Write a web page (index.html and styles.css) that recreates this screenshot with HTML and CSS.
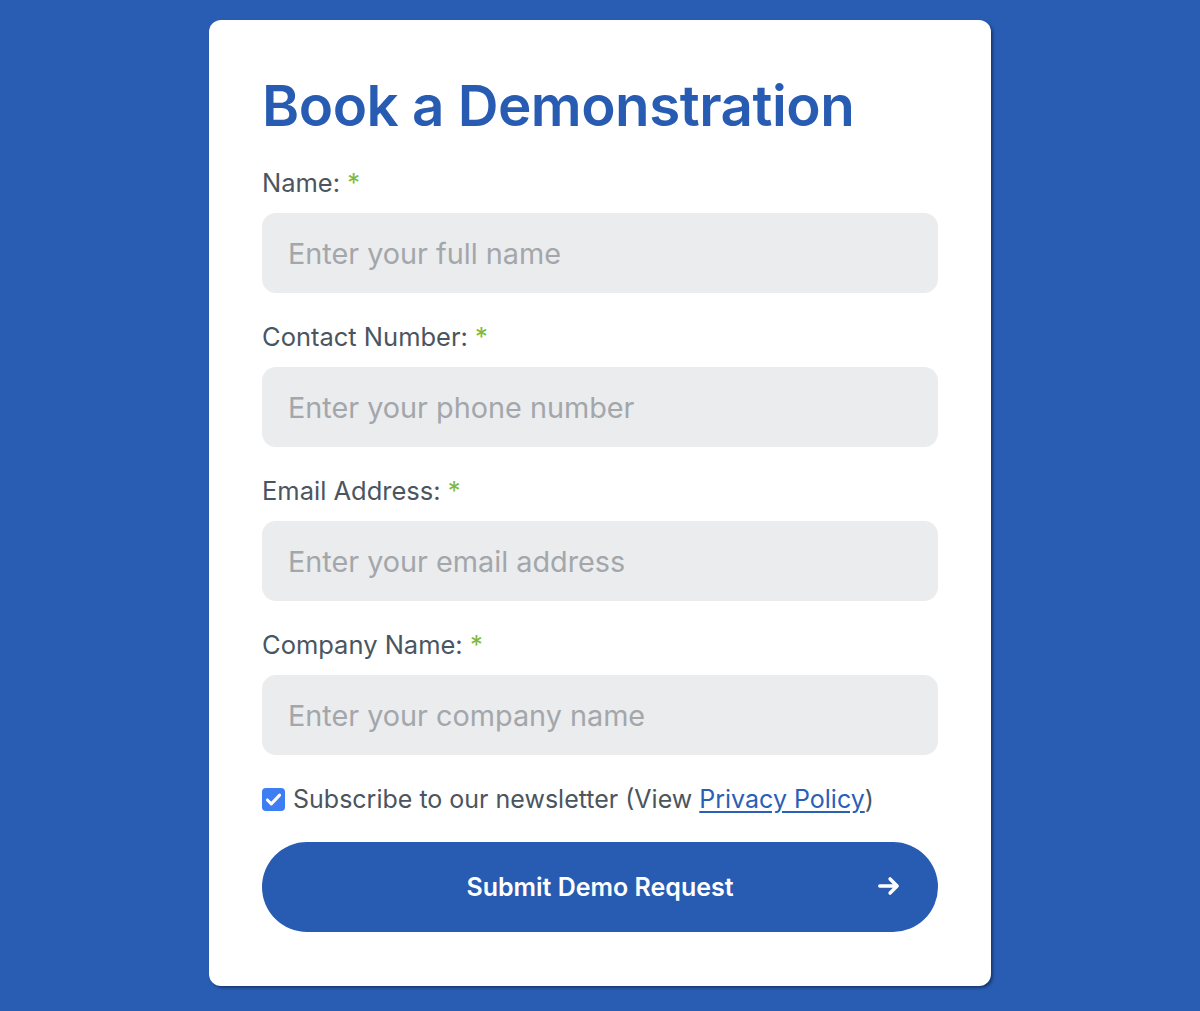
FILE: index.html
```html
<!DOCTYPE html>
<html lang="en">
<head>
<meta charset="utf-8">
<title>Book a Demonstration</title>
<link rel="stylesheet" href="styles.css">
</head>
<body>
<main class="page">
  <form class="card">
    <h1 class="title">Book a Demonstration</h1>
    <div class="field">
      <label class="label" for="name">Name: <span class="req">*</span></label>
      <input class="input" id="name" type="text" placeholder="Enter your full name">
    </div>
    <div class="field">
      <label class="label" for="phone">Contact Number: <span class="req">*</span></label>
      <input class="input" id="phone" type="tel" placeholder="Enter your phone number">
    </div>
    <div class="field">
      <label class="label" for="email">Email Address: <span class="req">*</span></label>
      <input class="input" id="email" type="email" placeholder="Enter your email address">
    </div>
    <div class="field">
      <label class="label" for="company">Company Name: <span class="req">*</span></label>
      <input class="input" id="company" type="text" placeholder="Enter your company name">
    </div>
    <label class="check">
      <span class="box"><svg viewBox="0 0 24 24" width="21" height="21"><path d="M5 12.5l4.5 4.5L19 7" fill="none" stroke="#fff" stroke-width="3.4" stroke-linecap="round" stroke-linejoin="round"/></svg></span>
      <span>Subscribe to our newsletter (View <a class="link" href="#">Privacy Policy</a>)</span>
    </label>
    <button class="submit" type="button">
      <span>Submit Demo Request</span>
      <svg class="arrow" viewBox="0 0 24 24" width="26" height="26"><path d="M3.5 12h16M13 5.5l6.5 6.5-6.5 6.5" fill="none" stroke="#fff" stroke-width="3.2" stroke-linecap="round" stroke-linejoin="round"/></svg>
    </button>
  </form>
</main>
</body>
</html>
```
FILE: styles.css
```css
* { box-sizing: border-box; }
html, body { margin: 0; padding: 0; }
body {
  background: #295db3;
  font-family: Inter, "Noto Sans", sans-serif;
  height: 1011px;
  overflow: hidden;
}
.page {
  display: flex;
  justify-content: center;
  padding-top: 20px;
}
.card {
  width: 782px;
  background: #fff;
  border-radius: 12px;
  box-shadow: 2px 2px 3px rgba(10, 30, 70, 0.55);
  padding: 58px 53px 54px 53px;
  display: flex;
  flex-direction: column;
}
.title {
  margin: 0 0 34px 0;
  font-size: 56.5px;
  font-weight: 600;
  line-height: 56px;
  color: #285cb2;
  letter-spacing: -0.5px;
}
.field {
  display: flex;
  flex-direction: column;
  margin-bottom: 29px;
}
.label {
  font-size: 25.5px;
  color: #4b5560;
  line-height: 30px;
  margin-bottom: 15px;
}
.req { color: #7fba3a; }
.input {
  height: 80px;
  flex-shrink: 0;
  border: none;
  border-radius: 14px;
  background: #ebeced;
  padding: 0 26px;
  font-family: inherit;
  font-size: 28.8px;
  color: #333;
  outline: none;
}
.input::placeholder { color: #a3a7ab; }
.check {
  display: flex;
  align-items: center;
  gap: 8px;
  font-size: 25px;
  color: #4b5560;
  line-height: 30px;
}
.box {
  width: 23px;
  height: 23px;
  flex-shrink: 0;
  border-radius: 4px;
  background: #3d7ef2;
  display: flex;
  align-items: center;
  justify-content: center;
}
.link { color: #2a5fb8; text-decoration: underline; text-underline-offset: 3px; }
.submit {
  margin-top: 28px;
  height: 90px;
  flex-shrink: 0;
  border: none;
  border-radius: 45px;
  background: #285cb2;
  color: #fff;
  font-family: inherit;
  font-size: 25px;
  font-weight: 600;
  position: relative;
  display: flex;
  align-items: center;
  justify-content: center;
}
.arrow {
  position: absolute;
  right: 36px;
  top: 50%;
  margin-top: -14px;
}
```
